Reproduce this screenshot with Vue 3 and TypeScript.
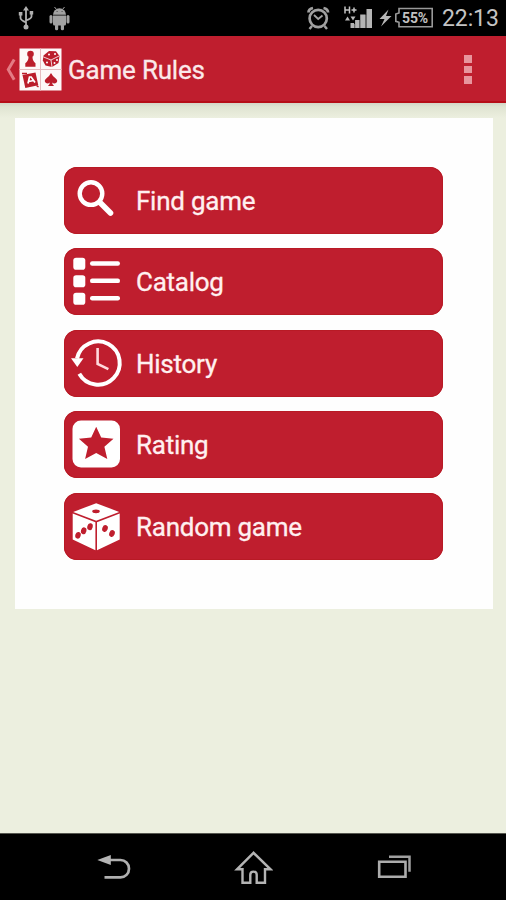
<script setup lang="ts">
interface MenuItem {
  id: string
  label: string
}

const items: MenuItem[] = [
  { id: 'find', label: 'Find game' },
  { id: 'catalog', label: 'Catalog' },
  { id: 'history', label: 'History' },
  { id: 'rating', label: 'Rating' },
  { id: 'random', label: 'Random game' },
]
</script>

<template>
  <div class="screen">
    <header class="status">
      <svg class="usb" viewBox="18 5 16 26" width="16" height="26">
        <g fill="none" stroke="#b0b0b0" stroke-width="1.8">
          <path d="M26 9V27M20.500 14v4q0 2 5.500 4.500M31.500 13v3.500q0 2-5.500 4" />
        </g>
        <path d="M26 6l3 4.500h-6zM18.800 12h3.600v3.600h-3.600zM29.700 11h3.500v3.500h-3.500z" fill="#b0b0b0" />
        <circle cx="26" cy="27" r="2.500" fill="#b0b0b0" />
      </svg>
      <svg class="droid" viewBox="49 6 21 25" width="21" height="25">
        <g fill="#a2a2a2">
          <path d="M53 14.800a6.500 6.500 0 0 1 13 0z" />
          <path d="M53 15.400h13V24q0 1.500-1.500 1.500h-10Q53 25.500 53 24z" />
          <rect x="49.500" y="15" width="3" height="8.500" rx="1.500" />
          <rect x="66.500" y="15" width="3" height="8.500" rx="1.500" />
          <rect x="55" y="24" width="3.200" height="6.300" rx="1.500" />
          <rect x="60.800" y="24" width="3.200" height="6.300" rx="1.500" />
        </g>
        <path d="M54.500 7l2 2.500M64.500 7l-2 2.500" stroke="#a2a2a2" />
        <path d="M56.500 11.500h1.200M61.500 11.500h1.200" stroke="#555" stroke-width="1.200" />
      </svg>
      <svg class="alarm" viewBox="306 6 24 25" width="24" height="25">
        <g fill="none" stroke="#a0a0a0">
          <circle cx="318.200" cy="18.500" r="8.600" stroke-width="2.700" />
          <path d="M314 15l4.200 4 4.300-3.500" stroke-width="1.800" />
          <path d="M308.500 12.500q0-3.500 4.500-4.500M328 12.500q0-3.500-4.500-4.500" stroke-width="2.800" />
          <path d="M312 26l-2.500 3M324.500 26l2.500 3" stroke-width="2.500" />
        </g>
      </svg>
      <svg class="signal" viewBox="343 5 31 24" width="31" height="24">
        <path d="M345 6.500v7M349.500 6.500v7M345 10h4.500M351.500 10h5M354 7.500v5" fill="none" stroke="#c4c4c4" stroke-width="1.500" />
        <path d="M345 20.500l2.500-4 2.500 4zM350.500 16.500h5l-2.500 4z" fill="#b8b8b8" />
        <path d="M350.500 23h3.600v5h-3.600zM355.100 20h4.300v8h-4.300z" fill="#b5b5b5" />
        <path d="M360.200 14.500h5.300V28h-5.300zM366.500 9h5.500v19h-5.500z" fill="#b5b5b5" />
        <path d="M354.100 24h1v4h-1zM359.400 20h.8v8h-.8zM365.500 15h1v13h-1z" fill="#777" />
      </svg>
      <svg class="bolt" viewBox="379 9 13 18" width="13" height="18">
        <path d="M388.500 9.500L379.500 19h5l-3.500 7.500 10.500-10.500h-5.500z" fill="#b6b6b6" />
      </svg>
      <div class="battery">
        <svg viewBox="394 7 40 22" width="40" height="22">
          <path d="M399 8.500h33.200v18.300H399v-4.500l-3.200-1v-7.300l3.200-1z" fill="none" stroke="#999" stroke-width="1.600" />
        </svg>
        <span>55%</span>
      </div>
      <time>22:13</time>
    </header>

    <div class="action-bar">
      <svg class="up" viewBox="5 57 11 25" width="11" height="25">
        <path d="M14.200 59.500L8.300 69.600 14.200 79.800" fill="none" stroke="#e47b84" stroke-width="3" />
      </svg>
      <svg class="logo" viewBox="19 48 43 43" width="43" height="43">
        <path d="M19.500 48.500h42v42h-42z" fill="#fdf8f8" />
        <path d="M40.500 48.500v42M19.500 69.500h42" stroke="#e5bcc0" />
        <g fill="#bb1d2b">
          <circle cx="30.500" cy="54" r="3.300" />
          <path d="M28.500 57h4q0 4 3 6.200v3.600H25.300v-3.600q3.200-2.200 3.200-6.200z" />
          <path d="M43.500 55.500l5.500-4.500 7 .3 3.500 4.700-1 7-6.500 4-6.500-1.500-2.700-5z" />
          <path d="M22.500 75l13-2.500 2.800 12.700-13 2.800z" />
          <path d="M51 73q1.300 2.800 4.500 5.200 3 2.300.8 4.500-2 1.600-4.200-.2.200 2.200 2 3.500h-6.200q1.800-1.300 2-3.500-2.200 1.800-4.200.2-2.200-2.200.8-4.500Q49.700 75.800 51 73z" />
        </g>
        <path d="M43.500 57l7.500 3 8-4M51 60l1 7" fill="none" stroke="#fff" stroke-width=".8" />
        <g fill="#fff">
          <circle cx="49" cy="54.500" r="1" /><circle cx="55" cy="54" r="1" />
          <circle cx="47" cy="62.500" r="1" /><circle cx="54.500" cy="63" r="1" /><circle cx="57" cy="60" r="1" />
        </g>
        <path d="M28 83.500l1.500-6.500h1.700l3.800 5.500M28.800 81.500l4.800-1" fill="none" stroke="#fff" stroke-width="1.700" />
        <path d="M22 73.500h5M36.500 85.500l2 1.500" stroke="#bb1d2b" stroke-width="1.500" />
      </svg>
      <h1>Game Rules</h1>
      <div class="overflow"><i></i><i></i><i></i></div>
    </div>

    <main>
      <div class="panel">
        <button v-for="item in items" :key="item.id" type="button">
          <svg viewBox="0 0 66 67" width="66" height="67" class="icon">
            <g v-if="item.id === 'find'" fill="none" stroke="#fff">
              <circle cx="27" cy="26.600" r="11.300" stroke-width="4.400" />
              <path d="M36 35.500l10.500 10.500" stroke-width="5.600" stroke-linecap="round" />
              <path d="M34 33.500l4 4" stroke-width="4" />
            </g>
            <g v-else-if="item.id === 'catalog'" fill="#fff">
              <template v-for="n in 3" :key="n">
                <rect x="9.300" :y="9.700 + (n - 1) * 17.500" width="12" height="12" rx="2.800" />
                <rect x="26" :y="13.300 + (n - 1) * 17.300" width="30" height="4.500" rx="2.200" />
              </template>
            </g>
            <g v-else-if="item.id === 'history'" fill="none" stroke="#fff">
              <path d="M13 28.500A21.600 21.600 0 1 1 15.300 43.700" stroke-width="4" />
              <path d="M7 28.200h12.500L13.300 37z" fill="#fff" stroke="none" />
              <path d="M33.600 18v16l10.800 5.200" stroke="#ffdadd" stroke-width="2.600" />
            </g>
            <g v-else-if="item.id === 'rating'">
              <rect x="8.500" y="9.500" width="47.500" height="47" rx="8.500" fill="#fff" />
              <path d="M32.200 15.800l5 10.700 12.300 1.200-9.100 8 2.900 12.300-11.100-6-11.100 6 2.900-12.300-9.100-8 12.300-1.200z" fill="#bf1e2e" />
            </g>
            <g v-else>
              <path d="M32.200 10.200l23 8.700-23 8.900-23-8.900z" fill="#fff" />
              <path d="M8.700 20.500l22.700 8.700v28L8.700 46.500zM33 29.200l22.700-8.700v26L33 57.200z" fill="#fff" />
              <g fill="#bf1e2e">
                <ellipse cx="32" cy="18.300" rx="3.800" ry="1.900" />
                <ellipse cx="14" cy="42.300" rx="2.700" ry="3.400" transform="rotate(15 14 42.300)" />
                <ellipse cx="19.700" cy="37.800" rx="2.700" ry="3.500" transform="rotate(15 19.700 37.800)" />
                <ellipse cx="26" cy="33.700" rx="2.700" ry="3.500" transform="rotate(15 26 33.700)" />
                <ellipse cx="41" cy="35.500" rx="2.700" ry="3.500" transform="rotate(22 41 35.500)" />
                <ellipse cx="48" cy="40.500" rx="2.700" ry="3.500" transform="rotate(22 48 40.500)" />
              </g>
            </g>
          </svg>
          <span>{{ item.label }}</span>
        </button>
      </div>
    </main>

    <nav>
      <svg viewBox="96 853 36 29" width="36" height="29">
        <path d="M108 860h12.500a8.500 8.700 0 0 1 0 17.400H104.500" fill="none" stroke="#b0b0b0" stroke-width="2.700" />
        <path d="M97.300 860l13.500-5v10z" fill="#b5b5b5" />
      </svg>
      <svg viewBox="234 850 39 35" width="39" height="35">
        <path d="M253.500 852.800L237 869.300h5.500v13.500h7.800v-8q0-3.200 3.200-3.200t3.200 3.200v8h8.300v-13.500h5.500z" fill="none" stroke="#b4b4b4" stroke-width="2.400" />
      </svg>
      <svg viewBox="377 854 35 26" width="35" height="26">
        <path d="M379.200 861.700h26.300v15.100h-26.300z" fill="none" stroke="#acacac" stroke-width="2.600" />
        <path d="M389 856.800h20.500v15" fill="none" stroke="#a0a0a0" stroke-width="2.500" />
      </svg>
    </nav>
  </div>
</template>

<style>
body {
  margin: 0;
  background: #000;
}
</style>

<style scoped>
.screen {
  display: flex;
  flex-direction: column;
  width: 506px;
  height: 900px;
  overflow: hidden;
  background: #ecefdf;
  font-family: Roboto, sans-serif;
}
svg {
  display: block;
  flex: none;
}
.status {
  display: flex;
  box-sizing: border-box;
  height: 36px;
  padding-left: 18px;
  background: #000;
}
.usb { margin-top: 5px; }
.droid { margin: 6px 0 0 15px; }
.alarm { margin: 6px 0 0 236px; }
.signal { margin: 5px 0 0 13px; }
.bolt { margin: 9px 0 0 5px; }
.battery {
  display: grid;
  width: 40px;
  height: 22px;
  margin: 7px 0 0 2px;
}
.battery > * { grid-area: 1 / 1; }
.battery span {
  padding-left: 8px;
  color: #c2c2c2;
  font-size: 14px;
  font-weight: 700;
  line-height: 22px;
  letter-spacing: -0.1px;
}
time {
  margin-left: 8px;
  color: #c4c4c4;
  font-size: 23px;
  line-height: 38px;
  letter-spacing: -0.1px;
}
.action-bar {
  display: flex;
  box-sizing: border-box;
  height: 67px;
  padding-left: 5px;
  background: #bf1e2e;
  border-bottom: 2px solid #b60d17;
}
.up { margin-top: 21px; }
.logo { margin: 12px 0 0 3px; }
h1 {
  margin: 0 0 0 6px;
  color: #fbe9ea;
  font-size: 26px;
  font-weight: 400;
  line-height: 69px;
  letter-spacing: -0.2px;
  -webkit-text-stroke: 0.3px #fbe9ea;
}
.overflow {
  display: flex;
  flex-direction: column;
  gap: 3px;
  margin: 19px 34px 0 auto;
}
.overflow i {
  width: 8px;
  height: 7.500px;
  background: #e8959d;
}
main {
  flex: 1;
  padding: 14.500px 13.500px 0 14.500px;
  background: linear-gradient(#d3d6c7 0, #e0e4d2 4px, #ecefdf 15px);
}
.panel {
  display: flex;
  flex-direction: column;
  gap: 14.500px;
  box-sizing: border-box;
  height: 491.500px;
  padding: 49px 50px 0 49.500px;
  background: #fefefe;
}
button {
  display: flex;
  height: 67px;
  padding: 0;
  overflow: hidden;
  border: 0;
  border-radius: 13px;
  background: #bf1e2e;
  box-shadow: inset 0 0 0 1px #b81a25;
  color: #fff0f0;
  font: 400 26px/69px Roboto, sans-serif;
  letter-spacing: -0.25px;
  text-align: left;
  -webkit-text-stroke: 0.3px #fff0f0;
}
button span { margin-left: 6px; }
nav {
  display: flex;
  align-items: flex-start;
  box-sizing: border-box;
  height: 67px;
  padding: 19px 94px 0 96px;
  justify-content: space-between;
  border-top: 1px solid #55564f;
  background: #000;
}
nav svg:nth-child(2) { margin: -3px 0 0 -2px; }
nav svg:nth-child(3) { margin-top: 1px; }
</style>
